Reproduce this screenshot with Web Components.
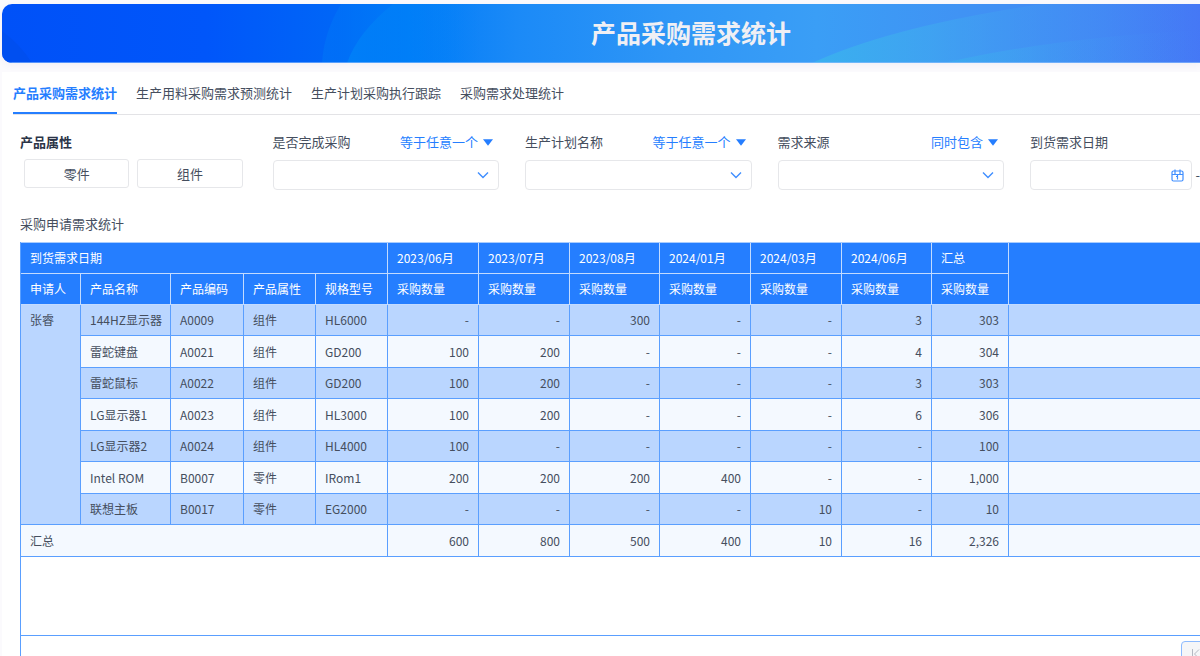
<!DOCTYPE html>
<html lang="zh-CN">
<head>
    <meta charset="UTF-8">
    <meta name="viewport" content="width=device-width, initial-scale=1.0">
    <title>产品采购需求统计</title>
    <style>
        html, body {
            height: 100%;
            margin: 0;
        }
        body {
            --blue: #257eff;
            --line: #5a9fff;
            --text: #454e5e;
            overflow: hidden;
            background: #fbfafd;
            color: var(--text);
            font: 13px/20px "Noto Sans CJK SC", "Noto Sans", sans-serif;
        }
    </style>
</head>
<body>
    <template id="report-page">
        <style>
            :host {
                display: flex;
                flex-direction: column;
                gap: 9px;
                box-sizing: border-box;
                height: 100%;
                padding: 4px 0 0 2px;
            }
            main {
                flex: 1;
                display: flex;
                flex-direction: column;
                min-height: 0;
                background: #fff;
            }
            .body {
                flex: 1;
                display: flex;
                flex-direction: column;
                min-height: 0;
                padding: 17px 0 0 18px;
            }
        </style>
        <slot name="banner"></slot>
        <main>
            <slot name="tabs"></slot>
            <div class="body"><slot></slot></div>
        </main>
    </template>

    <template id="page-banner">
        <style>
            :host {
                display: grid;
                height: 59px;
                border-radius: 10px 0 0 10px;
                overflow: hidden;
                box-shadow: 0 2px 8px #4030600d;
            }
            svg, h1 {
                grid-area: 1 / 1;
            }
            svg {
                width: 100%;
                height: 59px;
            }
            h1 {
                margin: 0;
                padding: 10px 0 0 180px;
                justify-self: center;
                z-index: 1;
                color: #efeff4;
                font-size: 25px;
                line-height: 36px;
                font-weight: 700;
            }
        </style>
        <svg viewBox="0 0 1198 59" preserveAspectRatio="none" aria-hidden="true">
            <defs>
                <linearGradient id="base">
                    <stop offset="0" stop-color="#0051f8"/>
                    <stop offset=".17" stop-color="#0056fa"/>
                    <stop offset=".28" stop-color="#0066f7"/>
                    <stop offset=".34" stop-color="#007bf8"/>
                    <stop offset=".43" stop-color="#1b8af7"/>
                    <stop offset=".56" stop-color="#2f96f6"/>
                    <stop offset=".68" stop-color="#3a9ef6"/>
                    <stop offset=".8" stop-color="#4093f4"/>
                    <stop offset=".92" stop-color="#4387f4"/>
                    <stop offset="1" stop-color="#4577f5"/>
                </linearGradient>
                <linearGradient id="ring">
                    <stop offset="0" stop-color="#0080f8" stop-opacity=".35"/>
                    <stop offset="1" stop-color="#0080f8" stop-opacity="0"/>
                </linearGradient>
                <linearGradient id="disc">
                    <stop offset="0" stop-color="#0082f8" stop-opacity=".8"/>
                    <stop offset="1" stop-color="#0082f8" stop-opacity="0"/>
                </linearGradient>
                <linearGradient id="hill">
                    <stop offset="0" stop-color="#3ab2ee" stop-opacity=".9"/>
                    <stop offset=".3" stop-color="#3fa8f0" stop-opacity=".7"/>
                    <stop offset="1" stop-color="#4480f8" stop-opacity=".1"/>
                </linearGradient>
            </defs>
            <rect width="1198" height="59" fill="url(#base)"/>
            <path d="M0 27Q18 40 30 59H0Z" fill="#004ff0"/>
            <path d="M339 0Q322 28 320 59H480V0Z" fill="url(#ring)"/>
            <path d="M391 0Q356 28 345 59H480V0Z" fill="url(#disc)"/>
            <path d="M810 59Q890 22 1040 0H1198V59Z" fill="url(#hill)"/>
            <path d="M942 59Q1050 34 1198 26V59Z" fill="url(#hill)" opacity=".6"/>
            <path d="M0 58.500H1198" stroke="#8fc0ff" stroke-opacity=".6"/>
        </svg>
        <h1><slot></slot></h1>
    </template>

    <template id="tab-bar">
        <style>
            :host {
                display: block;
                padding-left: 11px;
            }
            nav {
                display: flex;
                gap: 19px;
                border-bottom: 1px solid #e3e3e6;
            }
            ::slotted(a) {
                box-sizing: border-box;
                height: 42px;
                padding-top: 11px;
                border-bottom: 2px solid transparent;
                color: inherit;
                text-decoration: none;
                white-space: nowrap;
            }
            ::slotted(a[aria-current]) {
                border-color: var(--blue);
                color: var(--blue);
                font-weight: 700;
            }
        </style>
        <nav><slot></slot></nav>
    </template>

    <template id="filter-row">
        <style>
            :host {
                display: grid;
                grid-template-columns: repeat(4, minmax(0, 4fr)) minmax(0, 3fr);
                gap: 26px;
                align-items: start;
            }
        </style>
        <slot></slot>
    </template>

    <template id="choice-filter">
        <style>
            :host {
                display: block;
            }
            fieldset {
                margin: 0;
                padding: 0;
                border: 0;
                min-width: 0;
            }
            legend {
                padding: 0;
                color: #2b3447;
                font-weight: 700;
            }
            .choices {
                display: flex;
                gap: 8px;
                padding: 7px 4px 0;
            }
            button {
                flex: 1;
                height: 29px;
                padding: 0;
                border: 1px solid #e6e7ea;
                border-radius: 3px;
                background: #fff;
                color: inherit;
                font: inherit;
            }
        </style>
        <fieldset>
            <legend></legend>
            <div class="choices"></div>
        </fieldset>
    </template>

    <template id="select-filter">
        <style>
            :host {
                display: block;
            }
            .head {
                display: flex;
                justify-content: space-between;
                padding-right: 6px;
            }
            .operator {
                display: flex;
                align-items: center;
                gap: 4px;
                color: var(--blue);
            }
            select {
                appearance: none;
                margin: 0;
                padding: 0;
                border: 0;
                background: none;
                color: inherit;
                font: inherit;
            }
            .box {
                display: grid;
                align-items: center;
                margin-top: 8px;
            }
            .box select, .box svg {
                grid-area: 1 / 1;
            }
            .box select {
                box-sizing: border-box;
                width: 100%;
                height: 30px;
                border: 1px solid #e6e7ea;
                border-radius: 4px;
                background: #fff;
            }
            .box svg {
                justify-self: end;
                margin-right: 10px;
                z-index: 1;
                pointer-events: none;
            }
        </style>
        <div class="head">
            <label for="value"></label>
            <span class="operator">
                <select aria-label="条件"><option></option></select>
                <svg width="10" height="7" viewBox="0 0 10 7" aria-hidden="true"><path d="M0 .3h10L5 6.700Z" fill="#257eff"/></svg>
            </span>
        </div>
        <div class="box">
            <select id="value"><option></option></select>
            <svg width="12" height="8" viewBox="0 0 12 8" fill="none" stroke="#3f8eff" stroke-width="1.400" aria-hidden="true"><path d="M1 1.500 6 6.500 11 1.500"/></svg>
        </div>
    </template>

    <template id="date-filter">
        <style>
            :host {
                display: block;
            }
            .range {
                display: flex;
                align-items: center;
                gap: 3px;
                margin-top: 8px;
            }
            .box {
                flex: 1;
                display: grid;
                align-items: center;
            }
            input, svg {
                grid-area: 1 / 1;
            }
            input {
                box-sizing: border-box;
                width: 100%;
                height: 30px;
                padding: 0 30px 0 8px;
                border: 1px solid #e6e7ea;
                border-radius: 4px;
                background: #fff;
                color: inherit;
                font: inherit;
            }
            svg {
                justify-self: end;
                margin-right: 8px;
                z-index: 1;
            }
        </style>
        <label for="from"></label>
        <div class="range">
            <div class="box">
                <input id="from" type="text">
                <svg width="13" height="13" viewBox="0 0 13 13" fill="none" stroke="#3f8eff" stroke-width="1.200" aria-hidden="true">
                    <rect x="1" y="2" width="11" height="10" rx="1.500"/>
                    <path d="M1 5.500h11M4 .5v5M9 .5v5M6.500 5.500v5M5 7.500h1.500"/>
                </svg>
            </div>
            <span>-</span>
        </div>
    </template>

    <template id="pivot-table">
        <style>
            :host {
                flex: 1;
                display: flex;
                flex-direction: column;
                min-height: 0;
            }
            h2 {
                margin: 24px 0 8px;
                font-size: 13px;
                line-height: 20px;
                font-weight: 400;
            }
            .frame {
                flex: 1;
                display: flex;
                flex-direction: column;
                border-left: 1px solid var(--line);
            }
            .scroll {
                height: 392px;
                border-top: 1px solid #a8ccff;
                border-bottom: 1px solid var(--line);
            }
            table {
                width: 100%;
                table-layout: fixed;
                border-spacing: 0;
                font-size: 12px;
                line-height: 18px;
            }
            th, td {
                box-sizing: border-box;
                padding: 0 9px;
                border-right: 1px solid var(--line);
                border-bottom: 1px solid var(--line);
                font-weight: 400;
                text-align: left;
                white-space: nowrap;
            }
            thead tr {
                height: 31px;
            }
            thead th {
                border-color: #c3dbff;
                background: var(--blue);
                color: #fff;
            }
            tbody tr {
                height: 32px;
                background: #f4f9ff;
            }
            tbody tr:nth-child(odd) {
                height: 31px;
                background: #bad6ff;
            }
            tbody th[rowspan] {
                padding-top: 6px;
                background: #bad6ff;
                vertical-align: top;
            }
            .num {
                text-align: right;
            }
            .rest {
                border-right: 0;
            }
            .pager {
                display: flex;
                justify-content: flex-end;
                padding-top: 5px;
            }
            button {
                width: 30px;
                height: 26px;
                padding: 0;
                margin-right: -11px;
                border: 1px solid #8dbbff;
                border-radius: 4px;
                background: #f5f6f8;
            }
        </style>
        <h2></h2>
        <div class="frame">
            <div class="scroll">
                <table>
                    <colgroup></colgroup>
                    <thead></thead>
                    <tbody></tbody>
                </table>
            </div>
            <div class="pager">
                <button type="button" aria-label="首页" disabled>
                    <svg width="10" height="10" viewBox="0 0 10 10" fill="none" stroke="#b4b9c2" aria-hidden="true"><path d="M1.500 0v10M8 .5 3.500 5 8 9.500"/></svg>
                </button>
            </div>
        </div>
    </template>

    <report-page>
        <page-banner slot="banner">产品采购需求统计</page-banner>
        <tab-bar slot="tabs">
            <a href="#product" aria-current="page">产品采购需求统计</a>
            <a href="#forecast">生产用料采购需求预测统计</a>
            <a href="#tracking">生产计划采购执行跟踪</a>
            <a href="#handling">采购需求处理统计</a>
        </tab-bar>
        <filter-row>
            <choice-filter label="产品属性" choices="零件,组件"></choice-filter>
            <select-filter label="是否完成采购" operator="等于任意一个"></select-filter>
            <select-filter label="生产计划名称" operator="等于任意一个"></select-filter>
            <select-filter label="需求来源" operator="同时包含"></select-filter>
            <date-filter label="到货需求日期"></date-filter>
        </filter-row>
        <pivot-table label="采购申请需求统计"></pivot-table>
    </report-page>

    <script>
        class TemplateElement extends HTMLElement {
            constructor() {
                super();
                const template = document.getElementById(this.localName);
                this.attachShadow({ mode: "open" }).appendChild(template.content.cloneNode(true));
            }
            find(selector) {
                return this.shadowRoot.querySelector(selector);
            }
        }

        customElements.define("report-page", class extends TemplateElement {});
        customElements.define("page-banner", class extends TemplateElement {});
        customElements.define("tab-bar", class extends TemplateElement {});
        customElements.define("filter-row", class extends TemplateElement {});

        customElements.define("choice-filter", class extends TemplateElement {
            connectedCallback() {
                this.find("legend").textContent = this.getAttribute("label");
                for (const choice of this.getAttribute("choices").split(",")) {
                    const button = document.createElement("button");
                    button.type = "button";
                    button.textContent = choice;
                    this.find(".choices").append(button);
                }
            }
        });

        customElements.define("select-filter", class extends TemplateElement {
            connectedCallback() {
                this.find("label").textContent = this.getAttribute("label");
                this.find(".operator option").textContent = this.getAttribute("operator");
            }
        });

        customElements.define("date-filter", class extends TemplateElement {
            connectedCallback() {
                this.find("label").textContent = this.getAttribute("label");
            }
        });

        const applicant = "张睿";
        const months = ["2023/06月", "2023/07月", "2023/08月", "2024/01月", "2024/03月", "2024/06月", "汇总"];
        const fields = ["申请人", "产品名称", "产品编码", "产品属性", "规格型号"];
        const widths = [60, 90, 73, 72, 72, 91, 91, 90, 91, 91, 90, 77];
        const rows = [
            ["144HZ显示器", "A0009", "组件", "HL6000", "-", "-", "300", "-", "-", "3", "303"],
            ["雷蛇键盘", "A0021", "组件", "GD200", "100", "200", "-", "-", "-", "4", "304"],
            ["雷蛇鼠标", "A0022", "组件", "GD200", "100", "200", "-", "-", "-", "3", "303"],
            ["LG显示器1", "A0023", "组件", "HL3000", "100", "200", "-", "-", "-", "6", "306"],
            ["LG显示器2", "A0024", "组件", "HL4000", "100", "-", "-", "-", "-", "-", "100"],
            ["Intel ROM", "B0007", "零件", "IRom1", "200", "200", "200", "400", "-", "-", "1,000"],
            ["联想主板", "B0017", "零件", "EG2000", "-", "-", "-", "-", "10", "-", "10"],
        ];
        const totals = ["600", "800", "500", "400", "10", "16", "2,326"];

        const th = text => `<th>${text}</th>`;
        const num = text => `<td class="num">${text}</td>`;
        const rest = `<td class="rest"></td>`;

        customElements.define("pivot-table", class extends TemplateElement {
            connectedCallback() {
                this.find("h2").textContent = this.getAttribute("label");
                this.find("colgroup").innerHTML = widths.map(w => `<col style="width: ${w}px">`).join("") + "<col>";
                this.find("thead").innerHTML =
                    `<tr><th colspan="5">到货需求日期</th>${months.map(th).join("")}<th class="rest" rowspan="2"></th></tr>` +
                    `<tr>${fields.map(th).join("")}${months.map(() => th("采购数量")).join("")}</tr>`;
                this.find("tbody").innerHTML = rows.map((row, i) =>
                    `<tr>${i ? "" : `<th rowspan="${rows.length}">${applicant}</th>`}` +
                    row.slice(0, 4).map(text => `<td>${text}</td>`).join("") +
                    `${row.slice(4).map(num).join("")}${rest}</tr>`
                ).join("") + `<tr><th colspan="5">汇总</th>${totals.map(num).join("")}${rest}</tr>`;
            }
        });
    </script>
</body>
</html>
